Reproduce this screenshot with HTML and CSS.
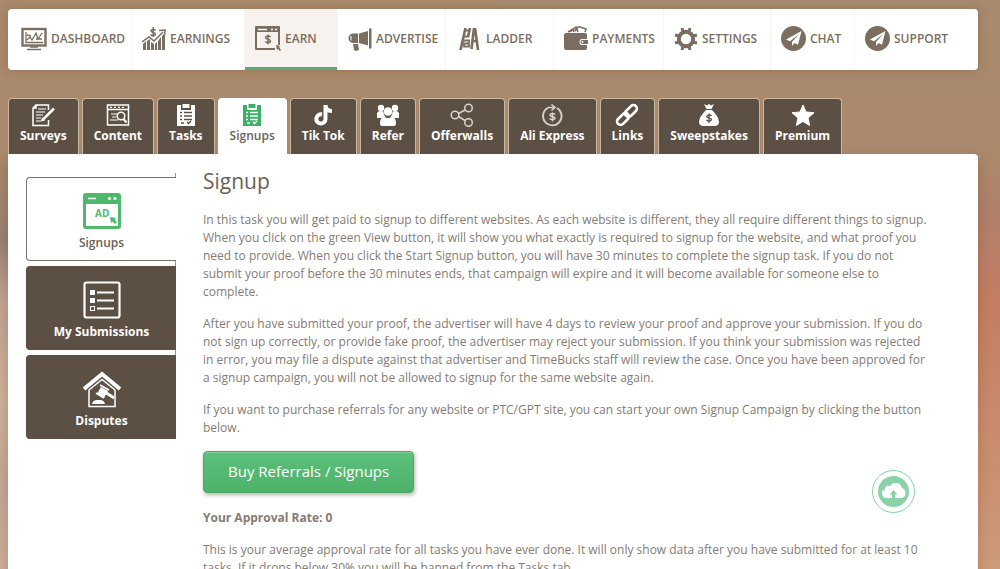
FILE: index.html
```html
<!DOCTYPE html>
<html lang="en">
<head>
  <meta charset="UTF-8">
  <meta name="viewport" content="width=device-width, initial-scale=1.0">
  <title>Signups - TimeBucks</title>
  <link rel="stylesheet" href="styles.css">
</head>
<body>
  <nav class="main-nav">
    <a href="#dashboard">
      <svg width="26" height="24" viewBox="0 0 26 24" fill="none" stroke="currentColor"><rect x="1.5" y="2" width="23" height="16.5" stroke-width="2.4"/><path d="M5 5v10.500h17M6 13l3-3 2 3 4-7 2 6 4-6M6 8l4 1M15 12h6" stroke-width="1.3"/><path d="M9 20h8M6 22.500h14" stroke-width="1.600"/></svg>
      DASHBOARD
    </a>
    <a href="#earnings">
      <svg width="24" height="24" viewBox="0 0 24 24" fill="currentColor"><path d="M1 17l3-3v9H1zM5 14l3-2v11H5zM9 15l3 2v6H9zM13 17l2-2v8h-2zM16 14l3-4v13h-3zM20 9l3-3v17h-3z"/><path d="M0 15l7-5 5 4 9-9M17 3.500l6-.5-.5 6M13.500 3.500c-1-1.500-4.500-1.300-4.500.5s4.500 1.300 4.500 3.200-3.500 2-4.800.3M11.200 0v10" fill="none" stroke="currentColor" stroke-width="1.500"/></svg>
      EARNINGS
    </a>
    <a href="#earn" class="active">
      <svg width="26" height="25" viewBox="0 0 26 25" fill="currentColor"><path d="M1 0h23q1 0 1 1v18h-2V6H2v16h18v2H1q-1 0-1-1V1q0-1 1-1z"/><path d="M3 3.500h9M16 3.500h2M20 3.500h2" stroke="#fff" stroke-width="1.500"/><path d="M15.500 11c-1-1.500-5-1.200-5 .7s5 1.300 5 3.300-4 2.200-5.300.4M13 8.500v10" fill="none" stroke="currentColor" stroke-width="1.500"/><path d="M21 19l4 1-1 1 2 3-1 1-2-2-1 1z"/></svg>
      EARN
    </a>
    <a href="#advertise">
      <svg width="24" height="24" viewBox="0 0 24 24" fill="currentColor"><path d="M21 1.500h2.500v20H21zM11 6.500l9-2.500v14.500l-9-2.500zM10 6.500V16H4.500q-4-1-4-4.700t4-4.800zM5 17h5l1 6-3 1-2-1z"/><path d="M3 9v4.500" stroke="#fff"/></svg>
      ADVERTISE
    </a>
    <a href="#ladder">
      <svg width="26" height="24" viewBox="-3 0 26 24" fill="none" stroke="currentColor"><path d="M6.500 1L1.500 23M11 1L9 10M15 1L12.500 22M16 1l3 22M13.500 14h4.500" stroke-width="2.600"/><path d="M5 3.500h6M5 9.500h5M4 13.500h6v6H5v-3h4" stroke-width="1.800"/></svg>
      LADDER
    </a>
    <a href="#payments">
      <svg width="24" height="25" viewBox="0 0 24 25" fill="currentColor"><path d="M2 7h19q2 0 2 2v4h-5q-2.500 0-2.500 3t2.500 3h5v3q0 2-2 2H2q-2 0-2-2V9q0-2 2-2z"/><path d="M18 14h6v4h-6q-1.500 0-1.500-2t1.500-2z"/><circle cx="18.500" cy="16" r="1" fill="#fff"/><path d="M4 6l5-3 1 3M6 6l6-5 2 5M11 5q3-5 5-4l6 2-1 3" fill="none" stroke="currentColor" stroke-width="1.600"/></svg>
      PAYMENTS
    </a>
    <a href="#settings">
      <svg width="24" height="24" viewBox="0 0 24 24" fill="none" stroke="currentColor"><circle cx="12" cy="12" r="7.200" stroke-width="4"/><path d="M8.800 4.200L8 1M15.200 4.200L16 1M8.800 19.800L8 23M15.200 19.800L16 23M4.200 8.800L1 8M4.200 15.200L1 16M19.800 8.800L23 8M19.800 15.200L23 16" stroke-width="3"/></svg>
      SETTINGS
    </a>
    <a href="#chat">
      <svg width="25" height="25" viewBox="0 0 25 25"><circle cx="12.500" cy="12.500" r="12.500" fill="currentColor"/><path d="M20.500 5L5 13.500l4 1.700L18 8l-7 8v4l2.500-3 3.500 1.700z" fill="#fff"/></svg>
      CHAT
    </a>
    <a href="#support">
      <svg width="25" height="25" viewBox="0 0 25 25"><circle cx="12.500" cy="12.500" r="12.500" fill="currentColor"/><path d="M20.500 5L5 13.500l4 1.700L18 8l-7 8v4l2.500-3 3.500 1.700z" fill="#fff"/></svg>
      SUPPORT
    </a>
  </nav>

  <nav class="tabs">
    <a href="#surveys">
      <svg width="24" height="24" viewBox="0 0 24 24" fill="none" stroke="currentColor"><path d="M17.500 7V2H5L2 5v17.500h15.500V17M5 2v3H2" stroke-width="1.500"/><path d="M7 6h8M5 9h9M5 12h7M5 15h5M5 18h5" stroke-width="1.200"/><path d="M23 5.500L12.500 16" stroke-width="2.500"/><path d="M10 18.500l1-4 3 3z" fill="currentColor" stroke="none"/></svg>
      Surveys
    </a>
    <a href="#content">
      <svg width="24" height="24" viewBox="0 0 24 24" fill="none" stroke="currentColor"><rect x="1.500" y="2" width="21" height="20" stroke-width="1.500"/><path d="M2 6.500h20" stroke-width="1.500"/><path d="M4 4.300h2M8 4.300h2M12 4.300h2M16 4.300h2M5 11h6M6 14h4M4 17h8" stroke-width="1.200"/><circle cx="15" cy="13" r="3.800" stroke-width="1.500"/><path d="M17.500 16l3 3.500" stroke-width="2"/></svg>
      Content
    </a>
    <a href="#tasks">
      <svg width="20" height="24" viewBox="0 0 20 24"><path d="M1 2h4v5h10V2h4v21H1z" fill="currentColor"/><path d="M6.500 1h7v4h-7z" fill="currentColor"/><path class="mark" d="M4 9.500h2M8 9.500h8M4 13h2M8 13h8M4 16.500h2M8 16.500h8M5 20h3M11 19l1.500 1.500L15 18" fill="none" stroke-width="1.300"/></svg>
      Tasks
    </a>
    <a href="#signups" class="active">
      <svg width="20" height="24" viewBox="0 0 20 24"><path d="M1 2h4v5h10V2h4v21H1z" fill="currentColor"/><path d="M6.500 1h7v4h-7z" fill="currentColor"/><path class="mark" d="M4 9.500h2M8 9.500h8M4 13h2M8 13h8M4 16.500h2M8 16.500h8M5 20h3M11 19l1.500 1.500L15 18" fill="none" stroke-width="1.300"/></svg>
      Signups
    </a>
    <a href="#tiktok">
      <svg width="20" height="24" viewBox="0 0 20 24" fill="none" stroke="currentColor" stroke-width="4"><path d="M9 11.500a4.600 4.600 0 1 0 3.500 4.500V2c0 4 2.500 6 6.500 6"/></svg>
      Tik Tok
    </a>
    <a href="#refer">
      <svg width="24" height="24" viewBox="0 0 24 24" fill="currentColor"><circle cx="5" cy="5" r="3.200"/><circle cx="19" cy="5" r="3.200"/><path d="M1 14v-3q0-3 4-3 2 0 2.500 1 0 3 2 4.500L7 15H1zM23 14v-3q0-3-4-3-2 0-2.500 1 0 3-2 4.500L17 15h6z"/><circle cx="12" cy="8.500" r="4.300"/><path d="M4 20q0-6 4.500-6 3.500 2 7 0 4.500 0 4.500 6 0 3-2 3H6q-2 0-2-3z"/></svg>
      Refer
    </a>
    <a href="#offerwalls">
      <svg class="thin" width="24" height="24" viewBox="0 0 24 24" fill="none" stroke="currentColor" stroke-width="1.500"><circle cx="5" cy="12" r="3.800"/><circle cx="18.500" cy="5" r="3.800"/><circle cx="18.500" cy="19.500" r="3.800"/><path d="M8.500 10.500L15 7M8.500 13.500L15 17.500"/></svg>
      Offerwalls
    </a>
    <a href="#aliexpress">
      <svg class="thin" width="24" height="24" viewBox="0 0 24 24" fill="none" stroke="currentColor"><path d="M8 4.800A9.300 9.300 0 1 0 17 5" stroke-width="1.800"/><path d="M8 4.500h6M11.500 1.500l3.500 3-3.500 3" stroke-width="1.600"/><path d="M15 11.500c-1-1.400-5-1.200-5 .7s5 1 5 2.900-4 2-5.300.4M12.500 9.500v9" stroke-width="1.500"/></svg>
      Ali Express
    </a>
    <a href="#links">
      <svg width="24" height="24" viewBox="0 0 24 24" fill="none" stroke="currentColor" stroke-width="2.600"><rect x="9" y="4.500" width="14" height="7" rx="3.500" transform="rotate(-45 16 8)"/><rect x="1" y="12.500" width="14" height="7" rx="3.500" transform="rotate(-45 8 16)"/></svg>
      Links
    </a>
    <a href="#sweepstakes">
      <svg width="22" height="24" viewBox="0 0 22 24"><path d="M6 1l3 1.500L11 1l2 1.500L16 1l-2.500 5h-5zM8 7h6q7 7 7 12 0 4-5 4H6q-5 0-5-4 0-5 7-12z" fill="currentColor"/><path class="mark" d="M13.500 12.800c-1-1.300-4.800-1-4.800.7s4.800 1.200 4.800 3.100-3.800 2-5 .4M11 10.500v9.500" fill="none" stroke-width="1.300"/></svg>
      Sweepstakes
    </a>
    <a href="#premium">
      <svg width="24" height="24" viewBox="0 0 24 24" fill="currentColor" stroke="currentColor" stroke-linejoin="round"><path d="M12 2l3 7 8 .7-6 5.300 1.700 7.500L12 18.500l-6.700 4L7 15 1 9.700 9 9z"/></svg>
      Premium
    </a>
  </nav>

  <main class="panel">
    <nav class="side">
      <a href="#signup-list" class="active">
        <svg width="38" height="38" viewBox="0 0 38 38"><path d="M3 1h32q3 0 3 3v30q0 3-3 3H3q-3 0-3-3V4q0-3 3-3zM3 12v22h32V12z" fill="currentColor" fill-rule="evenodd"/><path d="M5 6.500h8" stroke="#fff" stroke-width="1.500"/><circle cx="26.500" cy="6.500" r="1.600" fill="#fff"/><circle cx="32" cy="6.500" r="1.600" fill="#fff"/><text class="ad" x="12" y="25">AD</text><path d="M27 25l6 1-1.500 1.500L34 30l-2 2-2.500-2.500L28 31z" fill="currentColor"/></svg>
        Signups
      </a>
      <a href="#submissions">
        <svg width="38" height="38" viewBox="0 0 38 38" fill="none" stroke="currentColor"><rect x="1.500" y="1.500" width="35" height="35" rx="2" stroke-width="2.200"/><path d="M14 11.500h17M14 19.500h17M14 27.500h17" stroke-width="2"/><path d="M7 9h5v5H7zM7 17h5v5H7z" fill="currentColor" stroke="none"/><rect x="7.500" y="25.500" width="4" height="4"/></svg>
        My Submissions
      </a>
      <a href="#disputes">
        <svg width="38" height="38" viewBox="0 0 38 38" fill="none" stroke="currentColor"><path d="M1 19L19 4l18 15" stroke-width="4"/><path d="M6 20v16.500h26V20L19 9.500z" stroke-width="1.500"/><path d="M18 17l7 4-4 7-7-4z" fill="currentColor" stroke="none"/><path d="M17 15l9 5M13 23l8 5" stroke-width="2"/><path d="M22 22l9 6" stroke-width="3"/><path d="M9 34q1-4 5-4h3q4 0 5 4z" fill="currentColor" stroke="none"/></svg>
        Disputes
      </a>
    </nav>

    <section class="content">
      <h1>Signup</h1>
      <p>In this task you will get paid to signup to different websites. As each website is different, they all require different things to signup. When you click on the green View button, it will show you what exactly is required to signup for the website, and what proof you need to provide. When you click the Start Signup button, you will have 30 minutes to complete the signup task. If you do not submit your proof before the 30 minutes ends, that campaign will expire and it will become available for someone else to complete.</p>
      <p>After you have submitted your proof, the advertiser will have 4 days to review your proof and approve your submission. If you do not sign up correctly, or provide fake proof, the advertiser may reject your submission. If you think your submission was rejected in error, you may file a dispute against that advertiser and TimeBucks staff will review the case. Once you have been approved for a signup campaign, you will not be allowed to signup for the same website again.</p>
      <p>If you want to purchase referrals for any website or PTC/GPT site, you can start your own Signup Campaign by clicking the button below.</p>
      <button type="button" class="btn">Buy Referrals / Signups</button>
      <p><strong>Your Approval Rate: 0</strong></p>
      <p>This is your average approval rate for all tasks you have ever done. It will only show data after you have submitted for at least 10 tasks. If it drops below 30% you will be banned from the Tasks tab.</p>
    </section>
  </main>

  <button type="button" class="upload" aria-label="Upload">
    <svg width="31" height="31" viewBox="0 0 31 31"><circle cx="15.500" cy="15.500" r="15.500" fill="currentColor"/><path d="M8 22q-4-.5-4-4.500 0-3.500 3-4 0-5 5-3.500 2-3 5.500-3 5 0 6.500 5 3.500 1 3.500 5 0 4.500-4 5z" fill="#fff"/><path d="M14 22.500v-4h-2.500l4-4.500 4 4.500H17v4z" fill="currentColor"/></svg>
  </button>
</body>
</html>
```

FILE: styles.css
```css
* {
  box-sizing: border-box;
}
body {
  margin: 0;
  padding: 9px 22px 0 8px;
  font-family: "Open Sans", Arial, sans-serif;
  font-size: 12px;
  line-height: 18px;
  color: #857b72;
  background:
    linear-gradient(#a98a6c 0, #aa886b 160px, #988072 240px, #c3a294 300px, #ceb199 400px, #c5a698 480px, #ccae9a 569px) left / 50% 100% no-repeat,
    linear-gradient(#a78b6e 0, #ac886b 160px, #af806a 210px, #c47c62 300px, #c98b6e 430px, #cc9a79 569px) right / 50% 100% no-repeat;
}
a {
  text-decoration: none;
}
.main-nav {
  display: grid;
  grid-template-columns: 124fr 113fr 93fr 108fr 108fr 110fr 107fr 84fr 123fr;
  height: 61px;
  background: #fff;
  border-radius: 4px;
  overflow: hidden;
  box-shadow: 0 0 10px rgba(80, 50, 20, 0.25);
}
.main-nav a {
  display: flex;
  align-items: center;
  gap: 4px;
  padding: 0 0 2px 10px;
  border-right: 1px solid #f8f4f2;
  color: #7b6d60;
  font-weight: 600;
}
.main-nav a:first-child {
  padding-left: 13px;
}
.main-nav a:last-child {
  border-right: none;
}
.main-nav a.active {
  background: #f8f2ef;
  box-shadow: inset 0 -3px #57ab80;
}
.main-nav svg {
  flex: none;
}
.tabs {
  display: flex;
  gap: 3px;
  margin-top: 28px;
}
.tabs a {
  display: flex;
  flex-direction: column;
  align-items: center;
  height: 56px;
  padding: 4px 11px 0;
  border: 1px solid #cbb8a0;
  border-bottom: none;
  border-radius: 4px 4px 0 0;
  background: #5c5044;
  color: #fff;
  font-weight: 700;
}
.tabs .thin {
  color: #d9d2cb;
}
.tabs .mark {
  stroke: #5c5044;
}
.tabs a.active {
  background: #fff;
  border-color: #fff;
  color: #6b625a;
  font-weight: 600;
}
.tabs .active svg {
  color: #3fb167;
}
.tabs .active .mark {
  stroke: #fff;
}
.panel {
  display: flex;
  align-items: flex-start;
  gap: 27px;
  padding: 15px 45px 20px 18px;
  background: #fff;
  border-radius: 0 4px 0 0;
  box-shadow: 0 6px 12px rgba(80, 50, 20, 0.25);
}
.side {
  flex: none;
  width: 150px;
  display: flex;
  flex-direction: column;
  gap: 5px;
  margin-top: 4px;
  padding-top: 4px;
  border-right: 1px solid #999;
}
.side a {
  display: flex;
  flex-direction: column;
  align-items: center;
  gap: 4px;
  height: 84px;
  margin-right: -1px;
  padding-top: 14px;
  border: 1px solid #5c5044;
  border-right: none;
  border-radius: 4px 0 0 4px;
  background: #5c5044;
  color: #fff;
  font-weight: 700;
}
.side a.active {
  border-color: #77716c;
  background: #fff;
  color: #6b625a;
  font-weight: 600;
}
.side .active svg {
  color: #4fb96b;
}
.ad {
  fill: currentColor;
  font-size: 10px;
  font-weight: 700;
}
.content {
  flex: 1;
}
h1 {
  margin: 0 0 17px;
  font-size: 21px;
  line-height: 25px;
  font-weight: 400;
  color: #6b6056;
}
p {
  margin: 0 0 14px;
}
.btn {
  display: block;
  height: 42px;
  margin-bottom: 16px;
  padding: 0 24px 3px;
  border: 1px solid #4aa868;
  border-radius: 4px;
  background: linear-gradient(#5dc07d, #4cb269);
  box-shadow: inset 0 1px #84d29b, 1px 2px 4px rgba(90, 70, 30, 0.4);
  color: #fff;
  font-family: inherit;
  font-size: 15px;
  cursor: pointer;
}
.upload {
  position: fixed;
  right: 85px;
  bottom: 56px;
  display: flex;
  align-items: center;
  justify-content: center;
  width: 43px;
  height: 43px;
  padding: 0;
  border: 1px solid #83d2a2;
  border-radius: 50%;
  background: #fff;
  color: #8ad3a8;
  cursor: pointer;
}
```
